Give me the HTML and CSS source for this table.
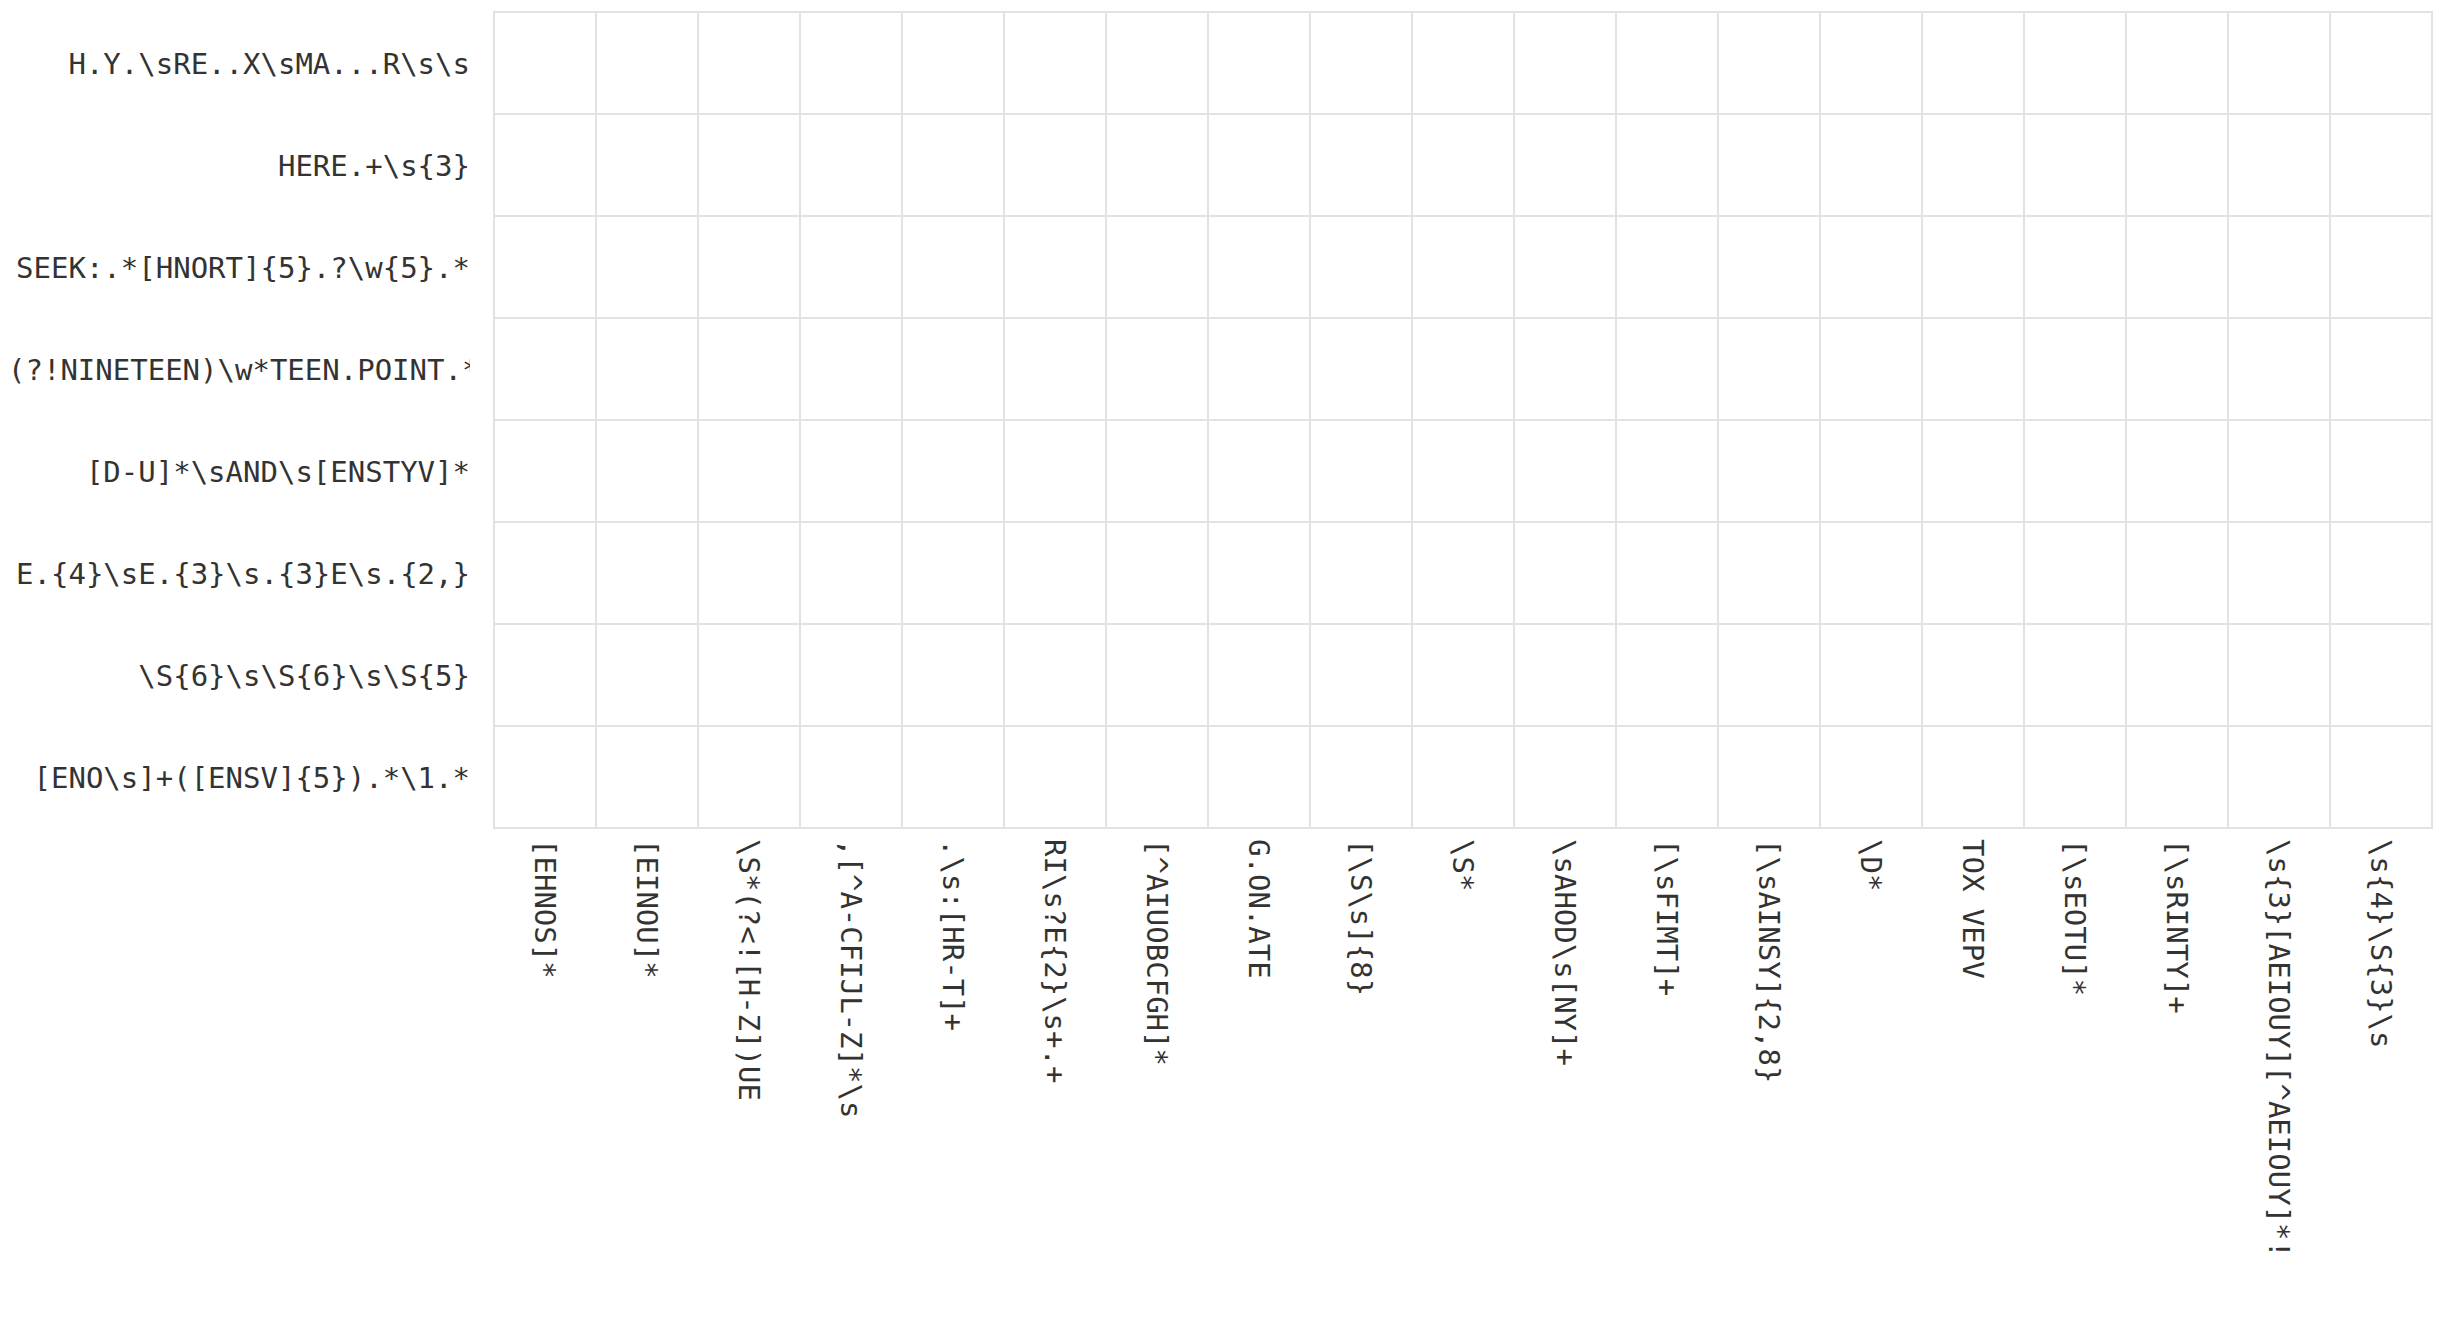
FILE: index.html
```html
<!DOCTYPE html>
<html>
<head>
<meta charset="utf-8">
<link rel="stylesheet" href="styles.css">
</head>
<body>
<div class="puzzle">
  <div class="top">
    <div class="row-labels">
      <div class="row-label">H.Y.\sRE..X\sMA...R\s\s</div>
      <div class="row-label">HERE.+\s{3}</div>
      <div class="row-label">SEEK:.*[HNORT]{5}.?\w{5}.*</div>
      <div class="row-label">(?!NINETEEN)\w*TEEN.POINT.*</div>
      <div class="row-label">[D-U]*\sAND\s[ENSTYV]*</div>
      <div class="row-label">E.{4}\sE.{3}\s.{3}E\s.{2,}</div>
      <div class="row-label">\S{6}\s\S{6}\s\S{5}</div>
      <div class="row-label">[ENO\s]+([ENSV]{5}).*\1.*</div>
    </div>
    <div class="board" id="board"></div>
  </div>
  <div class="bottom">
    <div class="spacer"></div>
    <div class="col-labels">
      <div class="col-label"><span class="vtext">[EHNOS]*</span></div>
      <div class="col-label"><span class="vtext">[EINOU]*</span></div>
      <div class="col-label"><span class="vtext">\S*(?&lt;![H-Z])UE</span></div>
      <div class="col-label"><span class="vtext">,[^A-CFIJL-Z]*\s</span></div>
      <div class="col-label"><span class="vtext">.\s:[HR-T]+</span></div>
      <div class="col-label"><span class="vtext">RI\s?E{2}\s+.+</span></div>
      <div class="col-label"><span class="vtext">[^AIUOBCFGH]*</span></div>
      <div class="col-label"><span class="vtext">G.ON.ATE</span></div>
      <div class="col-label"><span class="vtext">[\S\s]{8}</span></div>
      <div class="col-label"><span class="vtext">\S*</span></div>
      <div class="col-label"><span class="vtext">\sAHOD\s[NY]+</span></div>
      <div class="col-label"><span class="vtext">[\sFIMT]+</span></div>
      <div class="col-label"><span class="vtext">[\sAINSY]{2,8}</span></div>
      <div class="col-label"><span class="vtext">\D*</span></div>
      <div class="col-label"><span class="vtext">TOX VEPV</span></div>
      <div class="col-label"><span class="vtext">[\sEOTU]*</span></div>
      <div class="col-label"><span class="vtext">[\sRINTY]+</span></div>
      <div class="col-label"><span class="vtext">\s{3}[AEIOUY][^AEIOUY]*!</span></div>
      <div class="col-label"><span class="vtext">\s{4}\S{3}\s</span></div>
    </div>
  </div>
</div>
<script>
  var b = document.getElementById('board');
  for (var i = 0; i < 8 * 19; i++) {
    var c = document.createElement('div');
    c.className = 'cell';
    b.appendChild(c);
  }
</script>
</body>
</html>
```
FILE: styles.css
```css
html, body {
  margin: 0;
  padding: 0;
  background: #ffffff;
}

body {
  font-family: "DejaVu Sans Mono", "Liberation Mono", monospace;
  font-size: 29px;
  color: #333333;
}

.puzzle {
  padding: 11px 0 0 8px;
}

.top {
  display: flex;
  align-items: flex-start;
}

.row-labels {
  width: 462px;
  flex: none;
  margin-right: 23px;
  display: flex;
  flex-direction: column;
  padding-top: 2px;
}

.row-label {
  height: 102px;
  line-height: 102px;
  text-align: right;
  white-space: nowrap;
  overflow: hidden;
}

.board {
  flex: none;
  display: grid;
  grid-template-columns: repeat(19, 102px);
  grid-template-rows: repeat(8, 102px);
  border-top: 2px solid #e2e2e2;
  border-left: 2px solid #e2e2e2;
}

.cell {
  border-right: 2px solid #e2e2e2;
  border-bottom: 2px solid #e2e2e2;
}

.bottom {
  display: flex;
  align-items: flex-start;
}

.spacer {
  width: 486px;
  flex: none;
}

.col-labels {
  display: flex;
  padding-top: 10px;
}

.col-label {
  width: 102px;
  flex: none;
  display: flex;
  justify-content: center;
  align-items: flex-start;
}

.vtext {
  writing-mode: vertical-rl;
  white-space: nowrap;
  line-height: 1.2;
}
```
